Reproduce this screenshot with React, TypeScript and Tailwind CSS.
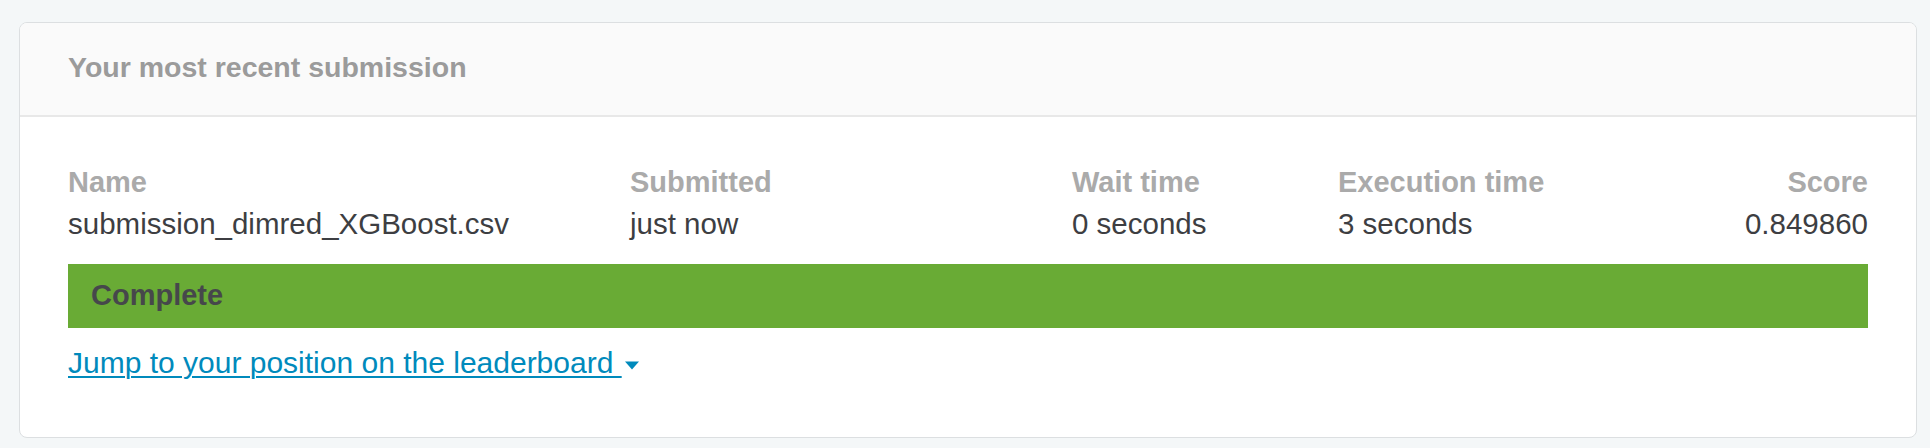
import React from 'react';

interface Column {
  label: string;
  value: string;
  alignRight?: boolean;
}

const columns: Column[] = [
  { label: 'Name', value: 'submission_dimred_XGBoost.csv' },
  { label: 'Submitted', value: 'just now' },
  { label: 'Wait time', value: '0 seconds' },
  { label: 'Execution time', value: '3 seconds' },
  { label: 'Score', value: '0.849860', alignRight: true },
];

const CaretDown: React.FC = () => (
  <svg width="16" height="9" viewBox="0 0 16 9" className="inline-block ml-[2px] mb-[6px]" aria-hidden="true">
    <path d="M1 0.5h14L8 8.5z" fill="#008abc" />
  </svg>
);

const App: React.FC = () => {
  return (
    <div className="w-[1930px] h-[448px] bg-[#f4f7f8] pt-[22px] pl-[19px] pr-[13px] font-['Liberation_Sans',Arial,sans-serif]">
      <div className="bg-white border border-[#dcdfe1] rounded-[8px] overflow-hidden">
        {/* header */}
        <div className="h-[94px] bg-[#fafafa] border-b-2 border-[#e8e8e8] flex items-center pl-[48px] pb-[3px]">
          <h2 className="text-[28.5px] font-bold text-[#9b9b9b] leading-[35px]">Your most recent submission</h2>
        </div>

        <div className="pl-[48px] pr-[48px] pt-[48px] pb-[52px]">
          <div className="grid grid-cols-[562px_442px_266px_1fr_auto]">
            {columns.map(col => (
              <div key={col.label} className={col.alignRight ? 'text-right' : ''}>
                <p className="text-[29px] leading-[35px] font-bold text-[#aaaaaa]">{col.label}</p>
                <p className="mt-[6px] text-[29.5px] leading-[35px] text-[#3d3e42]">{col.value}</p>
              </div>
            ))}
          </div>

          <div className="mt-[23px] h-[64px] bg-[#69ab35] flex items-center pl-[23px]">
            <span className="text-[29px] font-bold text-[#46474b]">Complete</span>
          </div>

          <div className="mt-[17px] leading-[35px]">
            <a href="#" className="text-[30px] text-[#008abc] underline underline-offset-[3px] decoration-[2px]">
              Jump to your position on the leaderboard&nbsp;
            </a>
            <CaretDown />
          </div>
        </div>
      </div>
    </div>
  );
};

export default App;
